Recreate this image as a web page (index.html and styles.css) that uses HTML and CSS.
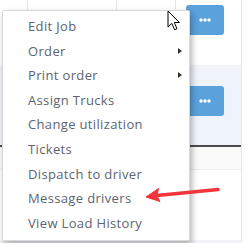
FILE: index.html
```html
<!DOCTYPE html>
<html lang="en">
<head>
  <meta charset="UTF-8" />
  <title>Jobs</title>
  <link rel="stylesheet" href="styles.css">
</head>
<body>
  <div class="table">
    <div class="row row-top">
      <div class="cell c1"></div>
      <div class="cell c2"></div>
      <div class="cell c3"></div>
      <div class="cell c4">
        <button class="more"><svg width="12" height="4" viewBox="0 0 12 4"><circle cx="2" cy="2" r="1.7" fill="#fff"/><circle cx="6" cy="2" r="1.7" fill="#fff"/><circle cx="10" cy="2" r="1.7" fill="#fff"/></svg></button>
      </div>
    </div>
    <div class="row row-sel">
      <div class="cell c1"></div>
      <div class="cell c2"></div>
      <div class="cell c3"></div>
      <div class="cell c4">
        <button class="more"><svg width="12" height="4" viewBox="0 0 12 4"><circle cx="2" cy="2" r="1.7" fill="#fff"/><circle cx="6" cy="2" r="1.7" fill="#fff"/><circle cx="10" cy="2" r="1.7" fill="#fff"/></svg></button>
      </div>
    </div>
    <div class="row row-sub">
      <div class="cell c1"></div>
      <div class="cell c2"></div>
      <div class="cell c3"></div>
      <div class="cell c4"></div>
    </div>
    <div class="row row-empty"></div>
    <div class="row row-foot"></div>
  </div>

  <!-- dropdown menu -->
  <ul class="menu">
    <li>Edit Job</li>
    <li class="sub">Order</li>
    <li class="sub">Print order</li>
    <li>Assign Trucks</li>
    <li>Change utilization</li>
    <li>Tickets</li>
    <li>Dispatch to driver</li>
    <li>Message drivers</li>
    <li>View Load History</li>
  </ul>

  <svg class="cursor" width="14" height="22" viewBox="0 0 14 22">
    <path d="M1 1 L1 17 L4.8 13.4 L7.6 19.8 L10 18.8 L7.3 12.5 L12.4 12.5 Z" fill="#fff" stroke="#000" stroke-width="1" stroke-linejoin="round"/>
  </svg>

  <svg class="arrow" width="76" height="16" viewBox="0 0 76 16">
    <line x1="73" y1="3.5" x2="12" y2="9.5" stroke="#f2353d" stroke-width="3.6" stroke-linecap="round"/>
    <path d="M1 11 L13.5 2.5 L12 10 L15 15.5 Z" fill="#f2353d" stroke="#f2353d" stroke-width="1" stroke-linejoin="round"/>
  </svg>
</body>
</html>
```
FILE: styles.css
```css
body {
  margin: 0;
  width: 249px;
  height: 243px;
  overflow: hidden;
  background: #fff;
  font-family: "Open Sans", "DejaVu Sans", sans-serif;
  position: relative;
}

.table {
  width: 241px;
  border-right: 1px solid #e6e9ee;
}
.row {
  display: grid;
  grid-template-columns: 27px 89px 59px 66px;
}
.cell {
  border-left: 1px solid #e6e6e6;
}
.cell.c1 { border-left: none; }

.row-top { height: 65px; }
.row-top .c4 { padding: 5px 0 0 10px; }

.row-sel {
  height: 80px;
  background: #eff4fb;
  border-bottom: 2px solid #4b4b4b;
}
.row-sel .c4 { padding: 21px 0 0 10px; }

.row-sub {
  height: 22px;
  background: #fafafa;
  border-bottom: 1px solid #e9edf2;
}
.row-empty { height: 70px; }
.row-foot { height: 10px; background: #f1f3f6; }

.more {
  display: flex;
  align-items: center;
  justify-content: center;
  width: 38px;
  height: 30px;
  border: none;
  border-radius: 3px;
  background: #5aa2dc;
  padding: 0;
}

.menu {
  position: absolute;
  left: 2px;
  top: 10px;
  width: 186px;
  margin: 0;
  padding: 3px 0 5px;
  list-style: none;
  background: #fff;
  border: 1px solid #d9d9d9;
  border-radius: 2px;
  box-shadow: 2px 3px 6px rgba(0, 0, 0, 0.3);
}
.menu li {
  height: 24.6px;
  line-height: 24.6px;
  padding-left: 25px;
  font-size: 13px;
  letter-spacing: 0.35px;
  color: #5d6470;
  position: relative;
}
.menu li.sub::after {
  content: "";
  position: absolute;
  right: 7px;
  top: 9px;
  border-left: 4px solid #333;
  border-top: 3.5px solid transparent;
  border-bottom: 3.5px solid transparent;
}

.cursor {
  position: absolute;
  left: 167px;
  top: 10px;
}
.arrow {
  position: absolute;
  left: 145px;
  top: 186px;
}
```
